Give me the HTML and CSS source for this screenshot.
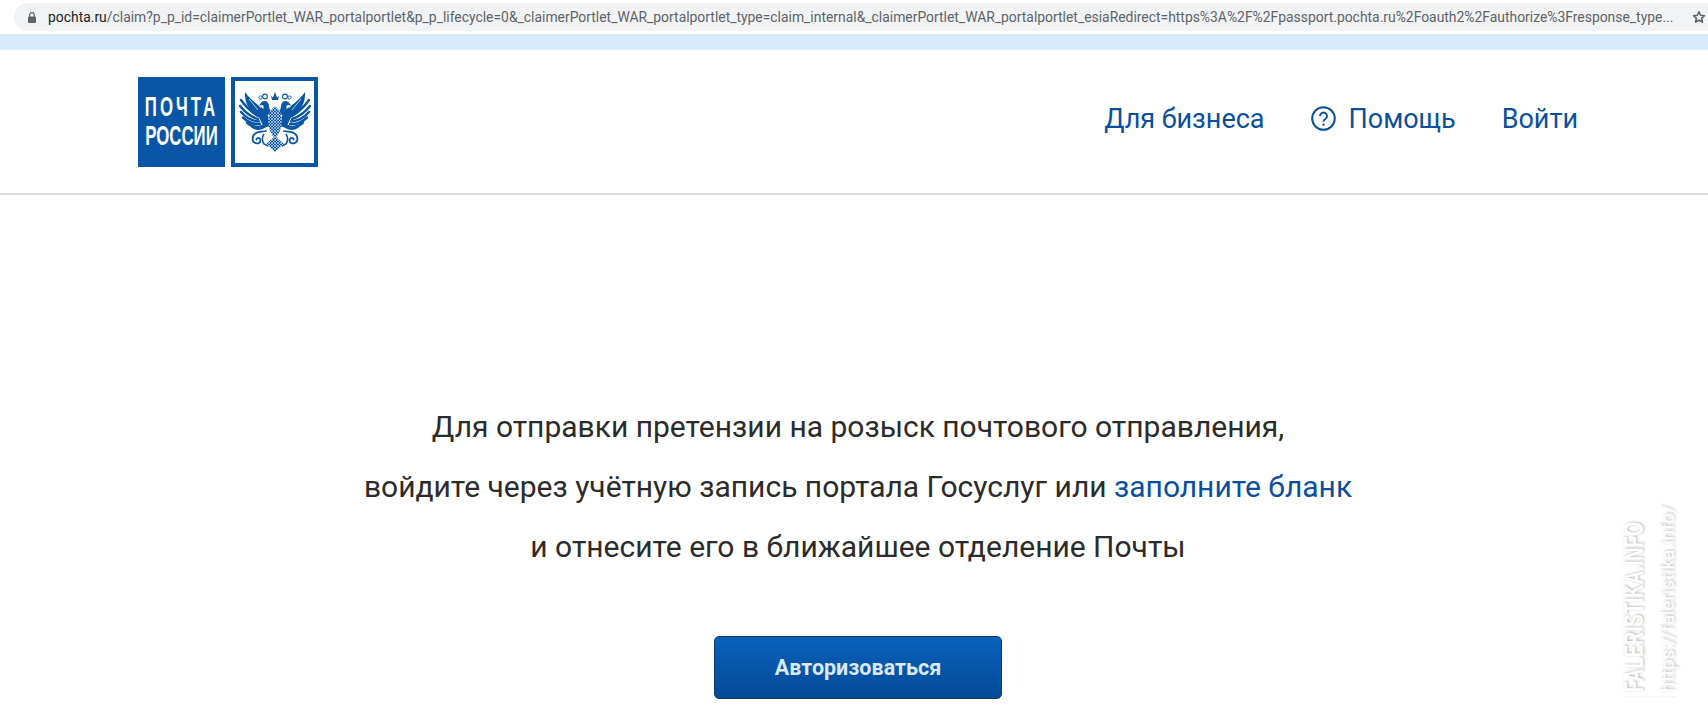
FILE: index.html
```html
<!DOCTYPE html>
<html lang="ru">
<head>
  <meta charset="UTF-8">
  <title>Почта России</title>
  <link rel="stylesheet" href="styles.css">
</head>
<body>
  <div class="addressbar">
    <div class="url">
      <svg class="lock" width="8" height="11" viewBox="0 0 8 11">
        <path d="M1.7 5V3a2.3 2.3 0 0 1 4.6 0V5" fill="none" stroke="#5f6368" stroke-width="1.2"/>
        <rect x="0" y="4.4" width="8" height="6.6" rx="1" fill="#5f6368"/>
      </svg>
      <span class="urltext"><span class="domain">pochta.ru</span>/claim?p_p_id=claimerPortlet_WAR_portalportlet&amp;p_p_lifecycle=0&amp;_claimerPortlet_WAR_portalportlet_type=claim_internal&amp;_claimerPortlet_WAR_portalportlet_esiaRedirect=https%3A%2F%2Fpassport.pochta.ru%2Foauth2%2Fauthorize%3Fresponse_type...</span>
      <svg class="star" width="14" height="14" viewBox="0 0 24 24">
        <path d="M12 3l2.8 6 6.5.8-4.8 4.4 1.3 6.5L12 17.5l-5.8 3.2 1.3-6.5L2.7 9.8 9.2 9z" fill="none" stroke="#5f6368" stroke-width="2.8" stroke-linejoin="round"/>
      </svg>
    </div>
  </div>
  <div class="bookmarks"></div>

  <header class="header">
    <div class="logo">
      <div class="logo-text">
        <span class="logo-line1">ПОЧТА</span>
        <span>РОССИИ</span>
      </div>
      <div class="logo-eagle">
        <svg width="72" height="60" viewBox="0 0 72 60">
          <defs>
            <pattern id="lattice" width="3" height="3" patternUnits="userSpaceOnUse">
              <rect width="3" height="3" fill="#0a56a6"/>
              <path d="M0 0l3 3M3 0l-3 3" stroke="#fff" stroke-width="0.55"/>
            </pattern>
            <g id="half">
              <!-- крыло -->
              <path d="M30 21C22 15 12 9 6 0c-.5 8 2 15 8 21l10 7z" fill="#0a56a6"/>
              <path d="M10 7l9 11M13 5l9 11" stroke="#fff" stroke-width="0.7" fill="none"/>
              <g fill="none" stroke="#0a56a6" stroke-width="2.4" stroke-linecap="round">
                <path d="M19 24Q9 18 2 8"/>
                <path d="M19 27Q9 24 1 14"/>
                <path d="M20 29.5Q10 29 2 20"/>
                <path d="M21 32Q12 33 4 25.5"/>
                <path d="M23 34Q15 37 8 30.5"/>
                <path d="M25 35Q19 39 13 34.5"/>
              </g>
              <path d="M19 23l9-3 3 14-6 2z" fill="#0a56a6"/>
              <!-- голова и шея -->
              <path d="M33 21c-2-3-3-5-3-7 0-3-2-5-4.5-5-2 0-3.5 1-4 2.5l-1.5 2 3-.5c1.5 0 2 1.5 1.5 3-.5 2 1 5 3.5 7z" fill="#0a56a6"/>
              <!-- малая корона -->
              <circle cx="26" cy="4.5" r="2.4" fill="none" stroke="#0a56a6" stroke-width="1.1"/>
              <circle cx="21.5" cy="5.5" r="1.6" fill="none" stroke="#0a56a6" stroke-width="0.9"/>
              <!-- лапа -->
              <path d="M27 39c-4 1-7 0-10 2-3 2-4 5-3 8 1 2 4 3 6 2 2-1 2-4 0-5-1.5-.5-2.5.5-2.5 1.500" fill="none" stroke="#0a56a6" stroke-width="1.8" stroke-linecap="round"/>
              <path d="M25 42c-2 3-2 7 0 10l4 2" fill="none" stroke="#0a56a6" stroke-width="1.5"/>
            </g>
          </defs>
          <use href="#half"/>
          <use href="#half" transform="translate(72 0) scale(-1 1)"/>
          <!-- тело -->
          <path d="M36 14l5 5 2 8-1 9-3 7-3 3-3-3-3-7-1-9 2-8z" fill="url(#lattice)"/>
          <!-- хвост -->
          <path d="M36 44l9 8-9 8-9-8z" fill="url(#lattice)"/>
          <!-- большая корона -->
          <path d="M33 8l-1-4 2 1.5L36 0l2 5.5L40 4l-1 4z" fill="#0a56a6"/>
        </svg>
      </div>
    </div>
    <nav class="nav">
      <a href="#">Для бизнеса</a>
      <a href="#" class="help">
        <svg width="25" height="25" viewBox="0 0 25 25">
          <circle cx="12.5" cy="12.5" r="11.3" fill="none" stroke="#0a4f9e" stroke-width="2"/>
          <path d="M9 10a3.5 3.5 0 1 1 5.3 3c-1.2.7-1.8 1.3-1.8 2.7" fill="none" stroke="#0a4f9e" stroke-width="1.9"/>
          <circle cx="12.5" cy="18.6" r="1.2" fill="#0a4f9e"/>
        </svg>
        Помощь
      </a>
      <a href="#">Войти</a>
    </nav>
  </header>

  <main class="main">
    <p>Для отправки претензии на розыск почтового отправления,</p>
    <p>войдите через учётную запись портала Госуслуг или <a href="#">заполните бланк</a></p>
    <p>и отнесите его в ближайшее отделение Почты</p>
    <button class="btn">Авторизоваться</button>
  </main>

  <div class="watermark">
    <span class="wm-big">FALERISTIKA.INFO</span>
    <span class="wm-small">https://faleristika.info/</span>
  </div>
</body>
</html>
```

FILE: styles.css
```css
html, body {
  margin: 0;
  padding: 0;
  height: 719px;
  overflow: hidden;
  background-color: #fff;
  font-family: Roboto, "Liberation Sans", sans-serif;
}

.addressbar {
  height: 35px;
  padding-top: 3px;
  box-sizing: border-box;
  background-color: #fff;
  border-bottom: 1px solid #e4e6e8;
}

.url {
  display: flex;
  align-items: center;
  height: 28px;
  margin-left: 14px;
  padding-left: 14px;
  background-color: #f1f3f4;
  border-radius: 14px 0 0 14px;
}

.lock {
  flex: none;
}

.urltext {
  margin-left: 12px;
  flex: 1;
  font-size: 13.9px;
  color: #5f6368;
  white-space: nowrap;
  overflow: hidden;
}

.domain {
  color: #202124;
}

.star {
  flex: none;
  margin: 0 2px 0 8px;
}

.bookmarks {
  height: 15px;
  background-color: #d6ebfc;
}

.header {
  display: flex;
  justify-content: space-between;
  align-items: center;
  height: 143px;
  padding: 0 130px 0 138px;
  border-bottom: 2px solid #dcdcdc;
}

.logo {
  display: flex;
  gap: 6px;
  height: 90px;
}

.logo-text {
  display: flex;
  flex-direction: column;
  justify-content: center;
  gap: 1px;
  width: 87px;
  height: 90px;
  background-color: #0a56a6;
  color: #fff;
  font-family: "Liberation Sans", sans-serif;
  font-size: 28px;
  font-weight: bold;
  line-height: 28px;
  overflow: hidden;
}

.logo-text span {
  display: flex;
  justify-content: center;
  white-space: nowrap;
  transform: scaleX(0.6);
}

.logo-text .logo-line1 {
  letter-spacing: 5px;
}

.logo-eagle {
  display: flex;
  align-items: center;
  justify-content: center;
  box-sizing: border-box;
  width: 87px;
  height: 90px;
  border: 4px solid #0a56a6;
  background-color: #fff;
}

.nav {
  display: flex;
  align-items: center;
  gap: 46px;
  padding-bottom: 6px;
}

.nav a {
  display: flex;
  align-items: center;
  gap: 13px;
  color: #0a4f9e;
  font-size: 27px;
  text-decoration: none;
}

.main {
  display: flex;
  flex-direction: column;
  align-items: center;
  padding-top: 202px;
  margin-left: 8px;
}

.main p {
  margin: 0;
  height: 60px;
  line-height: 60px;
  font-size: 30px;
  color: #2b2b2b;
  white-space: nowrap;
}

.main a {
  color: #0a4f9e;
  text-decoration: none;
}

.btn {
  width: 288px;
  height: 63px;
  margin-top: 59px;
  border: 1px solid #0b3a73;
  border-radius: 5px;
  background: linear-gradient(#0a62bd, #034a96);
  color: #dbe8f5;
  font-family: Roboto, sans-serif;
  font-size: 21.5px;
  font-weight: bold;
}

.watermark {
  position: absolute;
  right: 31px;
  bottom: 22px;
  display: flex;
  flex-direction: column;
  gap: 14px;
  padding-top: 4px;
  border-top: 1px solid rgba(0, 0, 0, 0.05);
  writing-mode: vertical-rl;
  transform: rotate(180deg);
  color: #fff;
  text-shadow: 1px 1px 3px rgba(0, 0, 0, 0.3);
}

.wm-big {
  height: 178px;
  font-family: "Liberation Sans", sans-serif;
  font-size: 28px;
  line-height: 22px;
  font-weight: bold;
  white-space: nowrap;
  transform: scaleY(0.66);
  transform-origin: top;
}

.wm-small {
  font-size: 18.7px;
  line-height: 18px;
  white-space: nowrap;
}
```
